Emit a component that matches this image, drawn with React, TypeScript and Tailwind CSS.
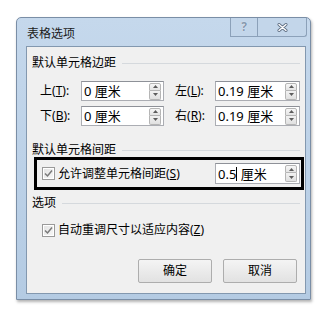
import React from 'react';

const font = { fontFamily: '"Noto Sans", "Noto Sans CJK SC", sans-serif' };

function Spinner() {
  return (
    <div className="flex flex-col w-[12px] h-[17px] mr-[2px] ml-auto">
      <div className="h-[8px] flex items-center justify-center border border-[#b5b5b5] rounded-t-[2px] bg-gradient-to-b from-[#f7f7f7] to-[#e4e4e4]">
        <svg width="5" height="3" viewBox="0 0 5 3">
          <path d="M0 3 L2.5 0 L5 3 Z" fill="#5c5c5c" />
        </svg>
      </div>
      <div className="h-[9px] flex items-center justify-center border border-t-0 border-[#b5b5b5] rounded-b-[2px] bg-gradient-to-b from-[#f2f2f2] to-[#e0e0e0]">
        <svg width="5" height="3" viewBox="0 0 5 3">
          <path d="M0 0 L2.5 3 L5 0 Z" fill="#5c5c5c" />
        </svg>
      </div>
    </div>
  );
}

function NumBox({ value, width, cursor }: { value: string; width: string; cursor?: boolean }) {
  return (
    <div className={`${width} h-full flex items-center bg-white border border-[#abadb3] border-t-[#8e9198] pl-[2px]`}>
      {cursor ? (
        <span className="flex items-center text-[13px] leading-[16px] text-black whitespace-pre">
          0.5<span className="inline-block w-px h-[14px] bg-black" /> 厘米
        </span>
      ) : (
        <span className="text-[13px] leading-[16px] text-black whitespace-pre">{value}</span>
      )}
      <Spinner />
    </div>
  );
}

function Check() {
  return (
    <div className="w-[13px] h-[13px] border border-[#9a9a9a] bg-white p-px shrink-0">
      <div className="w-full h-full bg-gradient-to-br from-[#e4e4e4] to-[#f6f6f6] flex items-center justify-center">
        <svg width="9" height="9" viewBox="0 0 9 9">
          <path d="M1 4.5 L3.5 7 L8 1.5" fill="none" stroke="#7a7a7a" strokeWidth="1.5" />
        </svg>
      </div>
    </div>
  );
}

function GroupHeader({ label, className }: { label: string; className: string }) {
  return (
    <div className={`flex items-center pl-[5px] pr-[5px] h-[14px] ${className}`}>
      <span className="text-[12px] leading-[14px] text-black whitespace-nowrap">{label}</span>
      <div className="flex-1 h-px bg-[#d5d9dd] ml-[6px]" />
    </div>
  );
}

function Label({ main, key1, width }: { main: string; key1: string; width: string }) {
  return (
    <div className={`${width} text-[12px] leading-[16px] text-black whitespace-nowrap`}>
      {main}(<span className="underline">{key1}</span>):
    </div>
  );
}

export default function App() {
  return (
    <div className="w-[327px] h-[315px] bg-white overflow-hidden pt-[17px]" style={font}>
      <div className="ml-[16px] w-[295px] h-[283px] flex flex-col border border-[#7a8ea6] rounded-t-[5px] bg-gradient-to-b from-[#c5d8ec] to-[#b4cbe3] shadow-[1px_2px_3px_rgba(0,0,0,0.3)]">
        {/* title bar */}
        <div className="h-[28px] flex items-start shrink-0">
          <span className="pl-[10px] pt-[8px] text-[12px] leading-[16px] text-[#1b1b1b]">表格选项</span>
          <div className="ml-auto mr-[3px] flex">
            <div className="w-[28px] h-[19px] border border-t-0 border-[#8ca1b9] flex items-center justify-center bg-[#c3d6ea]">
              <span className="text-[12px] leading-none font-bold text-[#8598ae] [text-shadow:0_0_1px_#fff]">?</span>
            </div>
            <div className="w-[49px] h-[19px] border border-t-0 border-l-0 border-[#8ca1b9] flex items-center justify-center bg-[#c3d6ea] rounded-br-[3px]">
              <svg width="11" height="9" viewBox="0 0 11 9">
                <path d="M2 1.5 L9 7.5 M9 1.5 L2 7.5" stroke="#5d6d82" strokeWidth="3" strokeLinecap="round" />
                <path d="M2 1.5 L9 7.5 M9 1.5 L2 7.5" stroke="#ffffff" strokeWidth="1.4" strokeLinecap="round" />
              </svg>
            </div>
          </div>
        </div>

        {/* client area */}
        <div className="flex-1 pl-[9px] pr-[4px] pb-[5px]">
          <div className="h-full border border-[#8398af] bg-[#f0f0f0] flex flex-col">
            <GroupHeader label="默认单元格边距" className="mt-[9px]" />

            <div className="mt-[11px] h-[20px] flex items-center pl-[13px]">
              <Label main="上" key1="T" width="w-[41px]" />
              <NumBox value="0 厘米" width="w-[83px]" />
              <div className="w-[11px]" />
              <Label main="左" key1="L" width="w-[40px]" />
              <NumBox value="0.19 厘米" width="w-[85px]" />
            </div>

            <div className="mt-[5px] h-[20px] flex items-center pl-[13px]">
              <Label main="下" key1="B" width="w-[41px]" />
              <NumBox value="0 厘米" width="w-[83px]" />
              <div className="w-[11px]" />
              <Label main="右" key1="R" width="w-[40px]" />
              <NumBox value="0.19 厘米" width="w-[85px]" />
            </div>

            <GroupHeader label="默认单元格间距" className="mt-[17px]" />

            <div className="ml-[7px] mt-0 w-[270px] h-[33px] border-[3px] border-black flex items-center pl-[5px] pr-px">
              <Check />
              <span className="ml-[3px] text-[12px] leading-[16px] text-black whitespace-nowrap">
                允许调整单元格间距(<span className="underline">S</span>)
              </span>
              <div className="ml-auto h-[21px] flex">
                <NumBox value="" width="w-[85px]" cursor />
              </div>
            </div>

            <GroupHeader label="选项" className="mt-[6px]" />

            <div className="mt-[12px] h-[16px] flex items-center pl-[15px]">
              <Check />
              <span className="ml-[3px] text-[12px] leading-[16px] text-black whitespace-nowrap">
                自动重调尺寸以适应内容(<span className="underline">Z</span>)
              </span>
            </div>

            <div className="mt-[21px] flex justify-end gap-[11px] pr-[8px]">
              <button className="w-[74px] h-[24px] border border-[#adadad] rounded-[2px] bg-gradient-to-b from-[#f4f4f4] to-[#e2e2e2] text-[12px] leading-[16px] text-black">
                确定
              </button>
              <button className="w-[74px] h-[24px] border border-[#adadad] rounded-[2px] bg-gradient-to-b from-[#f4f4f4] to-[#e2e2e2] text-[12px] leading-[16px] text-black">
                取消
              </button>
            </div>
          </div>
        </div>
      </div>
    </div>
  );
}
